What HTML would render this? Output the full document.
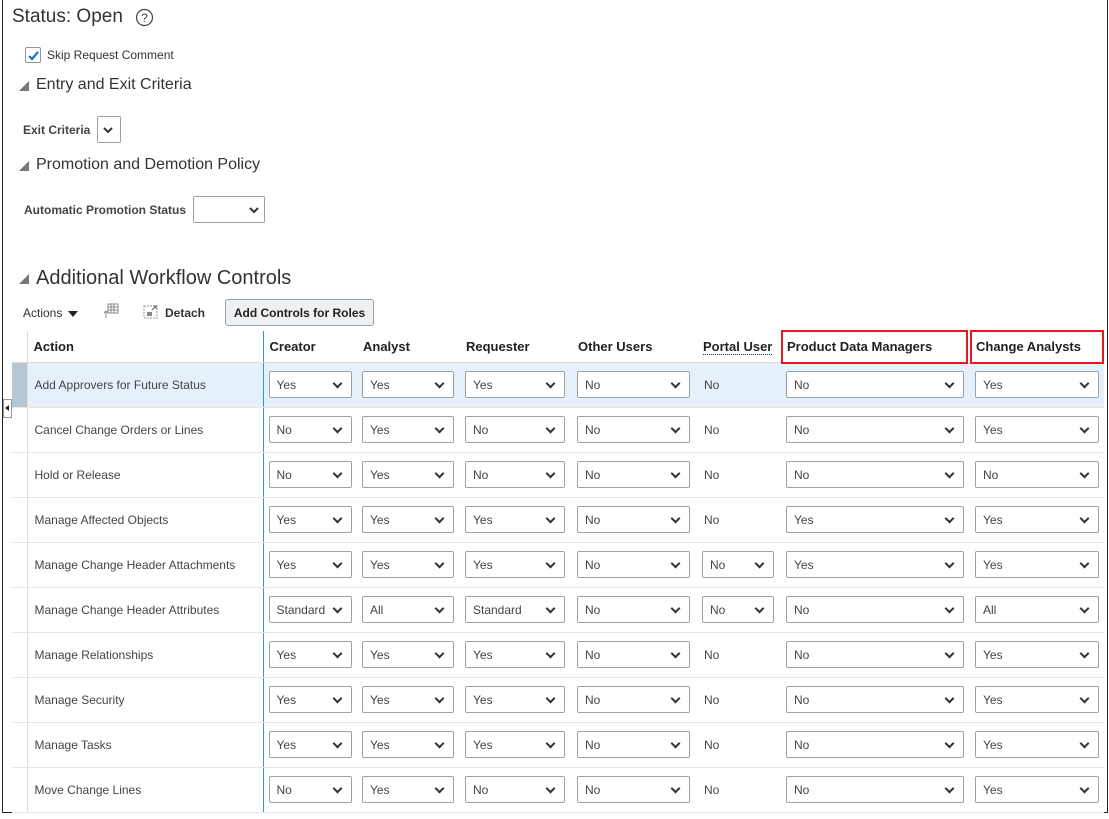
<!DOCTYPE html>
<html><head><meta charset="utf-8"><style>
*{box-sizing:border-box}
body{margin:0;width:1109px;height:819px;background:#fff;font-family:"Liberation Sans",Arial,sans-serif;color:#333;position:relative;overflow:hidden}
.frame{position:absolute;left:2px;top:0;width:1106px;height:813px;border:1px solid #222;border-top:none}
.a{position:absolute;white-space:nowrap}
.h{font-size:18px;color:#333}
.tri{position:absolute;width:0;height:0;border-left:10px solid transparent;border-bottom:10px solid #777}
.lbl{font-size:12px;font-weight:bold;color:#444}
.sel{position:absolute;height:27px;border:1px solid #9aa3ab;border-radius:2px;background:#fff;font-size:12px;color:#444;padding:6px 0 0 7px}
.sel svg{position:absolute;right:7px;top:9px}
table{position:absolute;left:12px;top:331px;border-collapse:collapse;table-layout:fixed}
td,th{padding:0;height:45px;border-bottom:1px solid #e6e6e6;font-size:12px;color:#444;position:relative;text-align:left;font-weight:normal;vertical-align:middle}
th{height:31px;font-weight:bold;font-size:13px;color:#222;padding-left:6px;border-bottom:1px solid #dcdcdc}
td.g{border-right:1px solid #dcdcdc}
tr.hl td{background:#e5f0fb}
tr.hl td.g{background:#b5c6d4}
td.act{padding-left:7px;border-right:1px solid #2b9eb3}
th.act{border-right:1px solid #2b9eb3}
.s{position:relative;display:inline-block;height:27px;border:1px solid #9aa3ab;border-radius:2px;background:#fff;padding:6px 0 0 7px;margin-left:5px;vertical-align:middle}
.s:after{content:"";position:absolute;right:10px;top:8px;width:5px;height:5px;border-right:2px solid #333;border-bottom:2px solid #333;transform:rotate(45deg)}
.red{position:absolute;border:2px solid #e11b22}
</style></head><body>
<div class="frame"></div>
<div class="a" style="left:12px;top:6px;font-size:19px;color:#333">Status: Open</div>
<svg class="a" style="left:135px;top:8px" width="19" height="19" viewBox="0 0 19 19"><circle cx="9.5" cy="9.5" r="8" fill="none" stroke="#444" stroke-width="1.2"/><text x="9.5" y="14" font-size="12" text-anchor="middle" fill="#444" font-family="Liberation Sans">?</text></svg>
<div class="a" style="left:25px;top:47px;width:16px;height:16px;border:1px solid #8a96a0;border-radius:2px;background:#fff"></div>
<svg class="a" style="left:27px;top:49px" width="13" height="13"><path d="M2 7l3 3 6-7" stroke="#1573c8" stroke-width="2.2" fill="none"/></svg>
<div class="a" style="left:47px;top:48px;font-size:12px;color:#333">Skip Request Comment</div>
<div class="tri" style="left:19px;top:81px"></div>
<div class="a h" style="left:36px;top:76px;font-size:16px">Entry and Exit Criteria</div>
<div class="a lbl" style="left:23px;top:123px">Exit Criteria</div>
<div class="sel" style="left:97px;top:116px;width:24px"><svg width="10" height="8"><path d="M1 2l4 4 4-4" stroke="#333" stroke-width="2" fill="none"/></svg></div>
<div class="tri" style="left:19px;top:161px"></div>
<div class="a h" style="left:36px;top:156px;font-size:16px">Promotion and Demotion Policy</div>
<div class="a lbl" style="left:24px;top:203px">Automatic Promotion Status</div>
<div class="sel" style="left:193px;top:196px;width:72px"><svg width="10" height="8" style="right:5px"><path d="M1 2l4 4 4-4" stroke="#333" stroke-width="2" fill="none"/></svg></div>
<div class="tri" style="left:19px;top:274px"></div>
<div class="a" style="left:36px;top:267px;font-size:20px;color:#333">Additional Workflow Controls</div>
<div class="a" style="left:23px;top:306px;font-size:12px;color:#333">Actions</div>
<div class="a" style="left:68px;top:311px;width:0;height:0;border-left:5px solid transparent;border-right:5px solid transparent;border-top:6px solid #222"></div>
<svg class="a" style="left:103px;top:303px" width="16" height="16"><rect x="5" y="1" width="10" height="9" fill="none" stroke="#888"/><path d="M5 4h10M8 1v9M11 1v9M5 7h10" stroke="#888"/><path d="M3 15V8M1 10l2-2 2 2" stroke="#888" fill="none"/></svg>
<svg class="a" style="left:143px;top:304px" width="16" height="16"><rect x="1" y="2" width="13" height="12" fill="none" stroke="#999" stroke-dasharray="2 1"/><rect x="4" y="8" width="5" height="4" fill="#888"/><path d="M9 6l4-4M10 2h3v3" stroke="#666" fill="none"/></svg>
<div class="a" style="left:165px;top:306px;font-size:12px;font-weight:bold;color:#333">Detach</div>
<div class="a" style="left:225px;top:299px;width:149px;height:27px;border:1px solid #9aa3ab;border-radius:3px;background:#eef0f2;font-size:12px;font-weight:bold;color:#222;padding-top:6px;text-align:center">Add Controls for Roles</div>
<div class="a" style="left:3px;top:399px;width:9px;height:19px;border:1px solid #999;background:#fff"></div>
<div class="a" style="left:5px;top:405px;width:0;height:0;border-top:3px solid transparent;border-bottom:3px solid transparent;border-right:4px solid #222"></div>
<table>
<colgroup><col style="width:15px"><col style="width:236px"><col style="width:94px"><col style="width:103px"><col style="width:112px"><col style="width:125px"><col style="width:84px"><col style="width:189px"><col style="width:134px"></colgroup>
<tr><th style="border-right:1px solid #dcdcdc;padding:0"></th><th class="act">Action</th><th>Creator</th><th>Analyst</th><th>Requester</th><th>Other Users</th><th><span style="border-bottom:1px dotted #333">Portal User</span></th><th>Product Data Managers</th><th>Change Analysts</th></tr>
<tr class="hl"><td class="g"></td><td class="act">Add Approvers for Future Status</td><td><span class="s" style="width:83px">Yes</span></td><td><span class="s" style="width:92px">Yes</span></td><td><span class="s" style="width:100px">Yes</span></td><td><span class="s" style="width:113px">No</span></td><td style="padding-left:7px">No</td><td><span class="s" style="width:178px">No</span></td><td><span class="s" style="width:124px">Yes</span></td></tr>
<tr><td class="g"></td><td class="act">Cancel Change Orders or Lines</td><td><span class="s" style="width:83px">No</span></td><td><span class="s" style="width:92px">Yes</span></td><td><span class="s" style="width:100px">No</span></td><td><span class="s" style="width:113px">No</span></td><td style="padding-left:7px">No</td><td><span class="s" style="width:178px">No</span></td><td><span class="s" style="width:124px">Yes</span></td></tr>
<tr><td class="g"></td><td class="act">Hold or Release</td><td><span class="s" style="width:83px">No</span></td><td><span class="s" style="width:92px">Yes</span></td><td><span class="s" style="width:100px">No</span></td><td><span class="s" style="width:113px">No</span></td><td style="padding-left:7px">No</td><td><span class="s" style="width:178px">No</span></td><td><span class="s" style="width:124px">No</span></td></tr>
<tr><td class="g"></td><td class="act">Manage Affected Objects</td><td><span class="s" style="width:83px">Yes</span></td><td><span class="s" style="width:92px">Yes</span></td><td><span class="s" style="width:100px">Yes</span></td><td><span class="s" style="width:113px">No</span></td><td style="padding-left:7px">No</td><td><span class="s" style="width:178px">Yes</span></td><td><span class="s" style="width:124px">Yes</span></td></tr>
<tr><td class="g"></td><td class="act">Manage Change Header Attachments</td><td><span class="s" style="width:83px">Yes</span></td><td><span class="s" style="width:92px">Yes</span></td><td><span class="s" style="width:100px">Yes</span></td><td><span class="s" style="width:113px">No</span></td><td><span class="s" style="width:72px">No</span></td><td><span class="s" style="width:178px">Yes</span></td><td><span class="s" style="width:124px">Yes</span></td></tr>
<tr><td class="g"></td><td class="act">Manage Change Header Attributes</td><td><span class="s" style="width:83px">Standard</span></td><td><span class="s" style="width:92px">All</span></td><td><span class="s" style="width:100px">Standard</span></td><td><span class="s" style="width:113px">No</span></td><td><span class="s" style="width:72px">No</span></td><td><span class="s" style="width:178px">No</span></td><td><span class="s" style="width:124px">All</span></td></tr>
<tr><td class="g"></td><td class="act">Manage Relationships</td><td><span class="s" style="width:83px">Yes</span></td><td><span class="s" style="width:92px">Yes</span></td><td><span class="s" style="width:100px">Yes</span></td><td><span class="s" style="width:113px">No</span></td><td style="padding-left:7px">No</td><td><span class="s" style="width:178px">No</span></td><td><span class="s" style="width:124px">Yes</span></td></tr>
<tr><td class="g"></td><td class="act">Manage Security</td><td><span class="s" style="width:83px">Yes</span></td><td><span class="s" style="width:92px">Yes</span></td><td><span class="s" style="width:100px">Yes</span></td><td><span class="s" style="width:113px">No</span></td><td style="padding-left:7px">No</td><td><span class="s" style="width:178px">No</span></td><td><span class="s" style="width:124px">Yes</span></td></tr>
<tr><td class="g"></td><td class="act">Manage Tasks</td><td><span class="s" style="width:83px">Yes</span></td><td><span class="s" style="width:92px">Yes</span></td><td><span class="s" style="width:100px">Yes</span></td><td><span class="s" style="width:113px">No</span></td><td style="padding-left:7px">No</td><td><span class="s" style="width:178px">No</span></td><td><span class="s" style="width:124px">Yes</span></td></tr>
<tr><td class="g"></td><td class="act">Move Change Lines</td><td><span class="s" style="width:83px">No</span></td><td><span class="s" style="width:92px">Yes</span></td><td><span class="s" style="width:100px">No</span></td><td><span class="s" style="width:113px">No</span></td><td style="padding-left:7px">No</td><td><span class="s" style="width:178px">No</span></td><td><span class="s" style="width:124px">Yes</span></td></tr>
</table>
<div class="red" style="left:781px;top:330px;width:187px;height:34px"></div>
<div class="red" style="left:970px;top:330px;width:134px;height:34px"></div>
</body></html>
